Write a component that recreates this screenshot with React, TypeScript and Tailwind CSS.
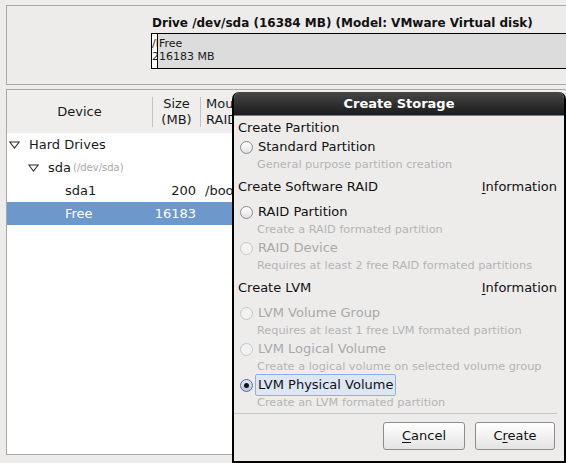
import React from "react";

type RState = "on" | "off" | "disabled";

function Radio({ state }: { state: RState }) {
  if (state === "on") {
    return (
      <div className="flex h-[13px] w-[13px] shrink-0 items-center justify-center rounded-full border border-[#5b6f8c] bg-gradient-to-b from-[#e3ebf6] to-[#b3c7e4]">
        <div className="h-[5px] w-[5px] rounded-full bg-[#111111]" />
      </div>
    );
  }
  if (state === "disabled") {
    return <div className="h-[13px] w-[13px] shrink-0 rounded-full border border-[#c6c6c6] bg-[#f2f2f2]" />;
  }
  return <div className="h-[13px] w-[13px] shrink-0 rounded-full border border-[#8a8a8a] bg-gradient-to-b from-white to-[#e2e2e2]" />;
}

function RadioRow({ label, state, focused }: { label: string; state: RState; focused?: boolean }) {
  return (
    <div className="flex h-[18px] items-center pl-[2px]">
      <Radio state={state} />
      {focused ? (
        <div className="ml-[2px] flex h-[22px] items-center rounded-[2px] border border-[#8fb0dc] bg-[#dde7f4] px-[2px] text-[#111111]">
          {label}
        </div>
      ) : (
        <span className={"ml-[5px] " + (state === "disabled" ? "text-[#a9a9a9]" : "text-[#111111]")}>{label}</span>
      )}
    </div>
  );
}

function Desc({ text }: { text: string }) {
  return (
    <div className="mt-[1px] flex h-[17px] items-center whitespace-nowrap pl-[19px] text-[11.3px] text-[#b4b4b4]">{text}</div>
  );
}

function Header({ text, info, className }: { text: string; info?: boolean; className: string }) {
  return (
    <div className={"flex h-[20px] items-center justify-between text-[#111111] " + className}>
      <span>{text}</span>
      {info && (
        <span>
          <span className="underline underline-offset-2">I</span>nformation
        </span>
      )}
    </div>
  );
}

function Tri() {
  return (
    <svg width="11" height="8" viewBox="0 0 11 8" className="shrink-0">
      <polygon points="0.8,1 10.2,1 5.5,7" fill="none" stroke="#2a2a2a" strokeWidth="1.1" />
    </svg>
  );
}

export default function App() {
  return (
    <div className="relative h-[463px] w-[566px] overflow-hidden bg-[#edeceb] font-['DejaVu_Sans',sans-serif] text-[13px] text-[#1a1a1a]">
      {/* Top drive panel */}
      <div className="ml-[6px] mt-[5px] h-[80px] w-[600px] border border-[#a8a8a8] pl-[144px] pt-[10px]">
        <div className="h-[15px] whitespace-nowrap pl-[1px] text-[12px] font-bold leading-[15px] text-[#111111]">
          Drive /dev/sda (16384 MB) (Model: VMware Virtual disk)
        </div>
        <div className="mt-[2px] flex h-[36px] border border-black text-[11px] leading-[13px]">
          <div className="w-[5px] overflow-hidden whitespace-nowrap bg-white pt-[3px]">
            <div>/boot</div>
            <div>200 MB</div>
          </div>
          <div className="flex-1 border-l border-black bg-[#dcdcdc] pl-[1px] pt-[3px]">
            <div>Free</div>
            <div>16183 MB</div>
          </div>
        </div>
      </div>

      {/* Device tree panel */}
      <div className="ml-[6px] mt-[4px] h-[366px] w-[600px] border border-[#a8a8a8] bg-white">
        <div className="flex h-[43px] bg-[#efeeed]">
          <div className="flex w-[145px] items-center justify-center">Device</div>
          <div className="h-[30px] w-px self-center bg-[#c4c4c4]" />
          <div className="flex w-[47px] flex-col items-center justify-center leading-[16px]">
            <span>Size</span>
            <span>(MB)</span>
          </div>
          <div className="h-[30px] w-px self-center bg-[#c4c4c4]" />
          <div className="flex flex-col justify-center pl-[5px] leading-[16px]">
            <span>Mount Point/</span>
            <span>RAID/Volume</span>
          </div>
        </div>
        <div className="flex h-[23px] items-center pl-[2px]">
          <Tri />
          <span className="ml-[9px]">Hard Drives</span>
        </div>
        <div className="flex h-[23px] items-center pl-[21px]">
          <Tri />
          <span className="ml-[9px]">sda</span>
          <span className="ml-[2px] text-[10px] text-[#a8a8a8]">(/dev/sda)</span>
        </div>
        <div className="flex h-[23px] items-center">
          <div className="w-[145px] pl-[58px]">sda1</div>
          <div className="w-[44px] text-right">200</div>
          <div className="pl-[9px]">/boot</div>
        </div>
        <div className="flex h-[23px] items-center bg-[#6c98cc] text-white">
          <div className="w-[145px] pl-[58px]">Free</div>
          <div className="w-[44px] text-right">16183</div>
        </div>
      </div>

      {/* Create Storage dialog */}
      <div className="absolute left-[232px] top-[92px] flex h-[371px] w-[334px] flex-col overflow-hidden rounded-t-[7px] border-x-2 border-b-2 border-black bg-[#edeceb]">
        <div className="-mx-[2px] flex h-[24px] shrink-0 items-center justify-center border-b border-[#5d80b6] bg-gradient-to-b from-[#474747] to-[#1c1c1c] text-[13px] font-bold text-white">
          Create Storage
        </div>
        <div className="flex flex-col pl-[4px] pr-[7px]">
          <Header text="Create Partition" className="mt-[2px]" />
          <RadioRow label="Standard Partition" state="off" />
          <Desc text="General purpose partition creation" />
          <Header text="Create Software RAID" info className="mt-[3px]" />
          <div className="mt-[6px]">
            <RadioRow label="RAID Partition" state="off" />
          </div>
          <Desc text="Create a RAID formated partition" />
          <RadioRow label="RAID Device" state="disabled" />
          <Desc text="Requires at least 2 free RAID formated partitions" />
          <Header text="Create LVM" info className="mt-[3px]" />
          <div className="mt-[6px]">
            <RadioRow label="LVM Volume Group" state="disabled" />
          </div>
          <Desc text="Requires at least 1 free LVM formated partition" />
          <RadioRow label="LVM Logical Volume" state="disabled" />
          <Desc text="Create a logical volume on selected volume group" />
          <RadioRow label="LVM Physical Volume" state="on" focused />
          <Desc text="Create an LVM formated partition" />
          <div className="-ml-[4px] mt-[1px] h-px bg-[#c6c6c6]" />
          <div className="mt-[8px] flex justify-end gap-[10px] pr-[2px]">
            <button className="flex h-[28px] w-[82px] items-center justify-center rounded-[3px] border border-[#8c8c8c] bg-gradient-to-b from-white to-[#e4e4e4] text-[#111111]">
              <span>
                <span className="underline underline-offset-2">C</span>ancel
              </span>
            </button>
            <button className="flex h-[28px] w-[80px] items-center justify-center rounded-[3px] border border-[#8c8c8c] bg-gradient-to-b from-white to-[#e4e4e4] text-[#111111]">
              <span>
                C<span className="underline underline-offset-2">r</span>eate
              </span>
            </button>
          </div>
        </div>
      </div>
    </div>
  );
}
